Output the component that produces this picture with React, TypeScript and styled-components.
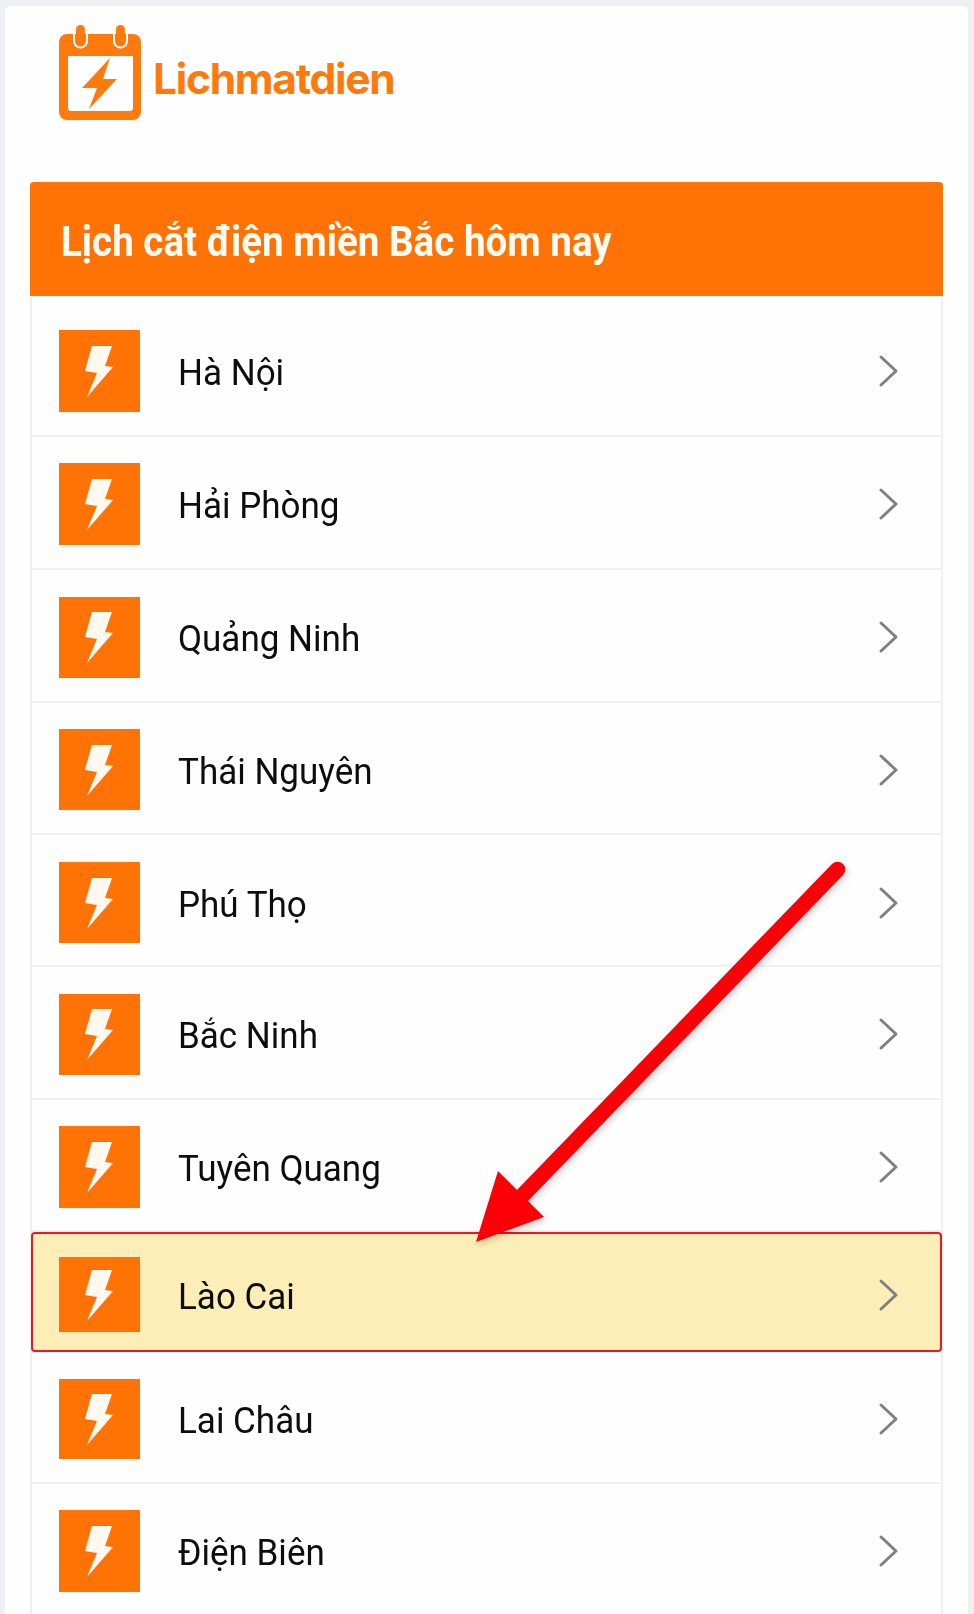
import React from "react";
import styled, { createGlobalStyle } from "styled-components";

const Global = createGlobalStyle`
  html, body { margin: 0; padding: 0; background: #eef0f6; }
  body { width: 974px; height: 1614px; overflow: hidden; font-family: Roboto, "Liberation Sans", sans-serif; }
  * { box-sizing: border-box; }
`;

const Page = styled.div`
  position: relative;
  width: 974px;
  height: 1614px;
  padding: 6px 6px 0 5px;
  overflow: hidden;
`;

const Card = styled.main`
  height: 1608px;
  background: #fefefe;
  border-radius: 5px 5px 0 0;
  padding: 0 25px;
  overflow: hidden;
`;

const Brand = styled.header`
  height: 176px;
  padding: 13px 0 0 26px;
  display: flex;
  align-items: flex-start;
  gap: 8px;
`;

const BrandName = styled.div`
  font-family: Inter, Roboto, sans-serif;
  font-weight: 700;
  font-size: 42.500px;
  line-height: 52px;
  letter-spacing: -1.3px;
  color: #ff7a0c;
  margin-top: 34px;
  margin-left: -1px;
`;

const Panel = styled.section`
  border-left: 2px solid #eff0f3;
  border-right: 2px solid #eff0f3;
`;

const PanelHead = styled.div`
  height: 114px;
  margin: 0 -2px;
  background: #ff7306;
  border-radius: 4px 4px 0 0;
  display: flex;
  align-items: center;
  padding-left: 31px;
`;

const PanelTitle = styled.h1`
  margin: 6px 0 0;
  color: #fffaf2;
  font-family: Roboto, sans-serif;
  font-weight: 700;
  font-size: 38.600px;
  line-height: 44px;
  white-space: nowrap;
  transform: scaleY(1.1);
  transform-origin: left center;
`;

const Row = styled.div<{ $h: number; $pt: number; $active?: boolean }>`
  height: ${(p) => p.$h}px;
  padding: ${(p) => p.$pt}px 41px 0 27px;
  display: flex;
  align-items: center;
  border-bottom: 2px solid #eff0f3;
  ${(p) =>
    p.$active &&
    `
    background: #fdeeb7;
    border: 2px solid #ee1620;
    border-radius: 4px;
    margin: 0 -1px;
    padding-left: 26px;
    padding-right: 40px;
  `}
`;

const IconBox = styled.div<{ $h: number }>`
  width: 81px;
  height: ${(p) => p.$h}px;
  flex: none;
  background: #ff7306;
  display: flex;
  align-items: center;
  justify-content: center;
`;

const Name = styled.span`
  flex: 1;
  margin-left: 38px;
  padding-top: 4px;
  font-size: 35px;
  line-height: 44px;
  color: #0d0d0d;
  transform: scaleY(1.04);
  transform-origin: left center;
`;

const Chevron = styled.svg`
  flex: none;
  width: 22px;
  height: 34px;
`;

const ArrowLayer = styled.svg`
  position: absolute;
  left: 0;
  top: 0;
  width: 974px;
  height: 1614px;
  pointer-events: none;
  filter: drop-shadow(2px 3px 3px rgba(0, 0, 0, 0.18));
`;

const rows = [
  { name: "Hà Nội", h: 141, pt: 10, icon: 82 },
  { name: "Hải Phòng", h: 133, pt: 3, icon: 82 },
  { name: "Quảng Ninh", h: 133, pt: 3, icon: 81 },
  { name: "Thái Nguyên", h: 132, pt: 3, icon: 81 },
  { name: "Phú Thọ", h: 132, pt: 5, icon: 81 },
  { name: "Bắc Ninh", h: 133, pt: 3, icon: 81 },
  { name: "Tuyên Quang", h: 132, pt: 3, icon: 82 },
  { name: "Lào Cai", h: 120, pt: 5, icon: 75, active: true },
  { name: "Lai Châu", h: 132, pt: 4, icon: 80 },
  { name: "Điện Biên", h: 132, pt: 3, icon: 82 },
];

const Bolt = () => (
  <svg width="81" height="82" viewBox="0 0 81 82" aria-hidden="true">
    <path d="M33 16H53L46 36L54 37L28 67L38 43L26 41Z" fill="#fff9f0" />
  </svg>
);

const Logo = () => (
  <svg width="90" height="104" viewBox="0 0 90 104" aria-hidden="true">
    <path
      fillRule="evenodd"
      d="M11 15H77A8 8 0 0 1 85 23V93A8 8 0 0 1 77 101H11A8 8 0 0 1 3 93V23A8 8 0 0 1 11 15ZM12 37V89A3 3 0 0 0 15 92H74A3 3 0 0 0 77 89V37Z"
      fill="#ff7a0c"
    />
    <path d="M54 39L26 69H41L33 90L61 60H47Z" fill="#ff7a0c" />
    <rect x="20" y="6" width="9" height="22" rx="4.500" fill="#ff7a0c" />
    <rect x="60" y="6" width="9" height="22" rx="4.500" fill="#ff7a0c" />
    <path d="M18 15V22A6.500 6.500 0 0 0 31 22V15" fill="none" stroke="#fff" strokeWidth="2" />
    <path d="M58 15V22A6.500 6.500 0 0 0 71 22V15" fill="none" stroke="#fff" strokeWidth="2" />
  </svg>
);

export default function App() {
  return (
    <Page>
      <Global />
      <Card>
        <Brand>
          <Logo />
          <BrandName>Lichmatdien</BrandName>
        </Brand>
        <Panel>
          <PanelHead>
            <PanelTitle>Lịch cắt điện miền Bắc hôm nay</PanelTitle>
          </PanelHead>
          {rows.map((r) => (
            <Row key={r.name} $h={r.h} $pt={r.pt} $active={r.active}>
              <IconBox $h={r.icon}>
                <Bolt />
              </IconBox>
              <Name>{r.name}</Name>
              <Chevron viewBox="0 0 22 34" aria-hidden="true">
                <path d="M3 3L18 17L3 31" fill="none" stroke="#808080" strokeWidth="3" strokeLinecap="round" strokeLinejoin="round" />
              </Chevron>
            </Row>
          ))}
        </Panel>
      </Card>
      <ArrowLayer viewBox="0 0 974 1614" aria-hidden="true">
        <path d="M476 1242L498 1171L517 1190L832 864A7.500 7.500 0 0 1 843 875L528 1201L544 1217Z" fill="#fb0007" />
      </ArrowLayer>
    </Page>
  );
}
